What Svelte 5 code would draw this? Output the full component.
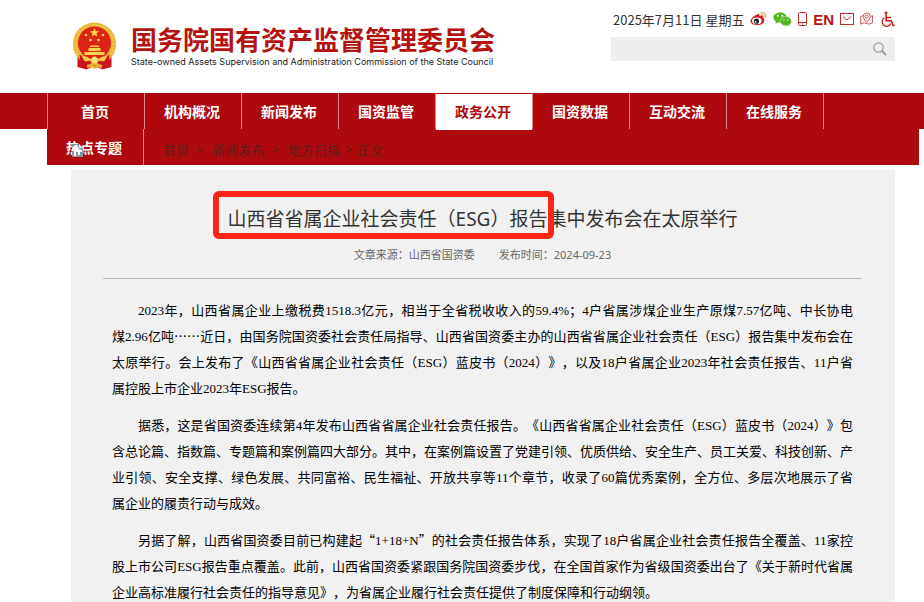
<script>
	const navItems = [
		'首页',
		'机构概况',
		'新闻发布',
		'国资监管',
		'政务公开',
		'国资数据',
		'互动交流',
		'在线服务',
		'热点专题'
	];
	const crumbs = ['首页', '新闻发布', '地方扫描'];

	// one entry per printed line
	const paragraphs = [
		[
			'2023年，山西省属企业上缴税费1518.3亿元，相当于全省税收收入的59.4%；4户省属涉煤企业生产原煤7.57亿吨、中长协电',
			'煤2.96亿吨……近日，由国务院国资委社会责任局指导、山西省国资委主办的山西省省属企业社会责任（ESG）报告集中发布会在',
			'太原举行。会上发布了《山西省省属企业社会责任（ESG）蓝皮书（2024）》，以及18户省属企业2023年社会责任报告、11户省',
			'属控股上市企业2023年ESG报告。'
		],
		[
			'据悉，这是省国资委连续第4年发布山西省省属企业社会责任报告。《山西省省属企业社会责任（ESG）蓝皮书（2024）》包',
			'含总论篇、指数篇、专题篇和案例篇四大部分。其中，在案例篇设置了党建引领、优质供给、安全生产、员工关爱、科技创新、产',
			'业引领、安全支撑、绿色发展、共同富裕、民生福祉、开放共享等11个章节，收录了60篇优秀案例，全方位、多层次地展示了省',
			'属企业的履责行动与成效。'
		],
		[
			'另据了解，山西省国资委目前已构建起“1+18+N”的社会责任报告体系，实现了18户省属企业社会责任报告全覆盖、11家控',
			'股上市公司ESG报告重点覆盖。此前，山西省国资委紧跟国务院国资委步伐，在全国首家作为省级国资委出台了《关于新时代省属',
			'企业高标准履行社会责任的指导意见》，为省属企业履行社会责任提供了制度保障和行动纲领。'
		]
	];

	// odd parts are latin letters and digits
	function splitLatin(line) {
		return line.split(/([A-Za-z0-9.%+]+)/);
	}

	let active = $state('政务公开');
	let keyword = $state('');
</script>

<div class="page" lang="zh-CN">
	<header>
		<a class="brand" href="#home">
			<svg class="emblem" viewBox="0 0 44 48" aria-hidden="true">
				<path d="M5 30 L39 30 L39 45 L30 47.500 L22 44 L14 47.500 L5 45Z" fill="#c8161d" />
				<circle cx="22" cy="22" r="21.5" fill="#e8b234" />
				<circle cx="22" cy="22" r="19" fill="none" stroke="#f3c94f" stroke-width="2" stroke-dasharray="2 1" />
				<circle cx="22" cy="21" r="16.500" fill="#dc2318" />
				<path d="M22 6l1.2 3.3h3.4l-2.7 2.1 1 3.3-2.9-2-2.9 2 1-3.3-2.7-2.1h3.4z" fill="#fbd84b" />
				<g fill="#fbd84b">
					<circle cx="13.5" cy="13" r="1.3" />
					<circle cx="30.5" cy="13" r="1.3" />
					<circle cx="18" cy="18" r="1.3" />
					<circle cx="26" cy="18" r="1.3" />
					<path d="M17 25l1-1.500h8l1 1.500zM16 26h12v3h-12zM12 30h20v3h-20z" />
				</g>
				<path d="M7 33l9 3 3 5-3 5-8-1.500z" fill="#c8161d" />
				<path d="M37 33l-9 3-3 5 3 5 8-1.500z" fill="#c8161d" />
				<path d="M9 34q6 0 9 3l4-3 4 3q3-3 9-3l-3 5q-4 1-6-1l-4 3-4-3q-2 2-6 1z" fill="#f6cb4c" />
				<path d="M14 43l4-1 4 2 4-2 4 1-1 3-4-1-3 2-3-2-4 1z" fill="#e8b234" />
				<circle cx="22" cy="38" r="3" fill="#fbe07a" />
			</svg>
			<span class="brand-text">
				<span class="brand-name">国务院国有资产监督管理委员会</span>
				<span class="brand-en">State-owned Assets Supervision and Administration Commission of the State Council</span>
			</span>
		</a>

		<div class="tools">
			<div class="tool-row">
				<span class="date">2025年7月11日 星期五</span>
				<a href="#weibo" aria-label="微博">
					<svg width="17" height="16" viewBox="0 0 18 16">
						<path d="M7 3.500C9 2 10.500 3 10 5c3-1 4 0 3.500 1.800C15.500 7.500 15.500 9 15 10.500 13 16 1 16 .5 10.500.5 8 4 4.500 7 3.500z" fill="#d7191f" />
						<ellipse cx="7.200" cy="10" rx="5" ry="3.500" fill="#fff" />
						<circle cx="6.800" cy="10.300" r="2.800" fill="#222" />
						<circle cx="5.900" cy="11" r="1" fill="#fff" />
						<path d="M11.500 3.800q3-.6 3 2.600M11.500 1.300q5.500-.5 5.200 5.500" fill="none" stroke="#ec9b3b" stroke-width="1.300" />
					</svg>
				</a>
				<a href="#wechat" aria-label="微信">
					<svg width="19" height="17" viewBox="0 0 20 17">
						<path d="M7.500 1C3.500 1 .5 3.300.5 6.300c0 1.700 1 3.200 2.500 4.200L2.500 13l2.700-1.500 2.300.3c4 0 7-2.400 7-5.500S11.500 1 7.500 1z" fill="#4fb81c" />
						<path d="M13.500 5.500c-3.400 0-6 2-6 4.800s2.600 4.700 6 4.700l2-.3 2.300 1.300-.5-2.200c1.300-.9 2.200-2.100 2.200-3.500 0-2.800-2.600-4.800-6-4.800z" fill="#4fb81c" stroke="#fff" stroke-width=".5" />
						<g fill="#fff">
							<circle cx="5.200" cy="4.500" r="1" />
							<circle cx="9.800" cy="4.500" r="1" />
							<circle cx="11.500" cy="9" r=".8" />
							<circle cx="15.500" cy="9" r=".8" />
						</g>
					</svg>
				</a>
				<a href="#mobile" aria-label="手机版">
					<svg width="9" height="14" viewBox="0 0 9 14" fill="none" stroke="#c02a2c">
						<rect x=".5" y=".5" width="8" height="13" rx="1" />
						<path d="M.5 10.500h8M4 12h1" />
					</svg>
				</a>
				<a class="en" href="#en">EN</a>
				<a href="#mail" aria-label="邮箱">
					<svg width="14" height="14" viewBox="0 0 14 14" fill="none" stroke="#c02a2c">
						<rect x=".5" y="1.500" width="13" height="11" />
						<path d="M3 4.500l4 3.500 4-3.500" />
					</svg>
				</a>
				<a href="#map" aria-label="网站地图">
					<svg width="14" height="14" viewBox="0 0 15 14" fill="none" stroke="#c9484a">
						<path d="M3 3.500L.8 4.500v8L4.500 11l5 1.500 4-1.500V3.500l-2.300.8" />
						<path d="M7.200 10.500C4.500 7.500 3.500 6 3.500 4.300a3.700 3.700 0 0 1 7.400 0c0 1.700-1 3.200-3.700 6.200z" />
						<circle cx="7.200" cy="4.500" r="1.600" />
					</svg>
				</a>
				<a href="#access" aria-label="无障碍">
					<svg width="15" height="17" viewBox="0 0 15 17" fill="none" stroke="#c01a1c">
						<circle cx="6" cy="2" r="1.500" fill="#c01a1c" stroke="none" />
						<path d="M6.200 3.500v6.300h5l2 4.700h1.500M6.500 6.500h4.500" stroke-width="1.600" />
						<path d="M4.300 6.800a4.600 4.600 0 1 0 6.700 5.700" stroke-width="1.200" />
					</svg>
				</a>
			</div>
			<form class="search" onsubmit={(e) => e.preventDefault()}>
				<input type="text" aria-label="站内搜索" bind:value={keyword} />
				<button type="submit" aria-label="搜索">
					<svg width="14" height="14" viewBox="0 0 14 14" fill="none" stroke="#999">
						<circle cx="5.500" cy="5.500" r="4.700" stroke-width="1.200" />
						<path d="M9 9l4 4" stroke-width="1.800" />
					</svg>
				</button>
			</form>
		</div>
	</header>

	<nav class="main-nav">
		<ul>
			{#each navItems as item, i}
				<li class:first={i === 0}>
					<a href="#nav-{i}" class:active={item === active} onclick={() => (active = item)}>{item}</a>
				</li>
			{/each}
		</ul>
	</nav>

	<nav class="breadcrumb" aria-label="当前位置">
		<svg class="marker" width="13" height="13" viewBox="0 0 13 13" aria-hidden="true">
			<path d="M1 0h7l4 4v9H1z" fill="#83949a" />
			<path d="M1 4l3-3h2l2 4 3 1v2H9v3H7V8H5v4H3V7H1z" fill="#fff" />
			<path d="M8 0l4 4H8z" fill="#dce9ec" />
		</svg>
		{#each crumbs as crumb, i}
			<a href="#crumb-{i}">{crumb}</a>
			<span class="sep" class:tight={i === crumbs.length - 1}>&gt;</span>
		{/each}
		<span>正文</span>
	</nav>

	<article>
		<div class="article-head">
			<h1><mark>山西省省属企业社会责任（ESG）报告</mark>集中发布会在太原举行</h1>
			<p class="meta">
				<span>文章来源：山西省国资委</span>
				<span>发布时间：2024-09-23</span>
			</p>
		</div>
		<div class="article-body">
			{#each paragraphs as lines}
				<p>
					{#each lines as line}
						<span class="line">{#each splitLatin(line) as part, i}{#if i % 2}<span class="latin">{part}</span>{:else}{part}{/if}{/each}</span>
					{/each}
				</p>
			{/each}
		</div>
	</article>
</div>

<style>
	:global(body) {
		margin: 0;
		background: #fff;
	}

	.page {
		font-family: 'Noto Sans', 'Noto Sans CJK SC', sans-serif;
		font-size: 13px;
		color: #333;
	}

	a {
		color: inherit;
		text-decoration: none;
	}

	header {
		display: flex;
		justify-content: space-between;
		box-sizing: border-box;
		min-height: 93px;
		padding: 9px 29px 0 72px;
	}

	.brand {
		display: flex;
		align-items: flex-start;
		gap: 14px;
		padding-top: 13px;
	}

	.emblem {
		width: 45px;
		height: 48px;
	}

	.brand-text {
		display: flex;
		flex-direction: column;
		white-space: nowrap;
	}

	.brand-name {
		font-family: 'Noto Sans CJK SC', sans-serif;
		font-size: 26px;
		font-weight: 700;
		line-height: 34px;
		color: #b4130f;
	}

	.brand-en {
		font-family: Inter, Arial, sans-serif;
		font-size: 9px;
		line-height: 12px;
		color: #222;
	}

	.tools {
		width: 284px;
	}

	.tool-row {
		display: flex;
		align-items: center;
		justify-content: space-between;
		height: 20px;
		padding-left: 2px;
		white-space: nowrap;
	}

	.tool-row svg {
		display: block;
	}

	.date {
		font-family: 'Noto Sans CJK SC', sans-serif;
	}

	.en {
		font-family: 'Liberation Sans', Arial, sans-serif;
		font-size: 15px;
		font-weight: 700;
		color: #b4130f;
	}

	.search {
		display: flex;
		height: 24px;
		margin-top: 8px;
		background: #eee;
	}

	.search input {
		flex: 1;
		min-width: 0;
		padding: 0 8px;
		border: none;
		background: none;
		outline: none;
	}

	.search button {
		display: flex;
		align-items: center;
		justify-content: center;
		width: 30px;
		padding: 0;
		border: none;
		background: none;
		cursor: pointer;
	}

	/* the item list is allowed to run over the bar when it wraps */
	.main-nav {
		height: 36px;
		background: #ae090c;
	}

	.main-nav ul {
		display: flex;
		flex-wrap: wrap;
		margin: 0 5px 0 47px;
		padding: 0;
		list-style: none;
		background: #ae090c;
	}

	.main-nav li {
		box-sizing: border-box;
		width: 97px;
		height: 36px;
		border-right: 1px solid #e08a8b;
	}

	.main-nav li.first {
		width: 98px;
		border-left: 1px solid #e08a8b;
	}

	.main-nav a {
		display: block;
		margin-top: 1px;
		padding: 0 2px 2px 0;
		font-family: 'Noto Sans CJK SC', sans-serif;
		font-size: 14px;
		font-weight: 700;
		line-height: 34px;
		text-align: center;
		color: #fff;
	}

	.main-nav a.active {
		background: #fff;
		color: #ae090c;
	}

	.breadcrumb {
		position: relative;
		display: flex;
		align-items: center;
		box-sizing: border-box;
		height: 36px;
		padding: 4px 0 0 163px;
		color: #5f1c1a;
	}

	.sep {
		margin: 0 8px;
	}

	.sep.tight {
		margin: 0 5px;
	}

	.marker {
		position: absolute;
		left: 71px;
		top: 15px;
	}

	article {
		margin: 5px 29px 0 71px;
		padding: 1px 33px 0 32px;
		background: #f1f1f1;
	}

	.article-head {
		padding: 32px 0 13px;
		border-bottom: 1px solid #b5b5b5;
		text-align: center;
	}

	h1 {
		margin: 0;
		font-size: 19px;
		font-weight: 400;
		line-height: 32px;
	}

	mark {
		position: relative;
		background: none;
		color: inherit;
	}

	mark::after {
		content: '';
		position: absolute;
		inset: -15px -7px -7px -15px;
		border: 6px solid #fb2416;
		border-radius: 6px;
	}

	.meta {
		display: flex;
		justify-content: center;
		gap: 24px;
		margin: 10px 0 0;
		font-size: 11px;
		line-height: 20px;
		color: #666;
	}

	.article-body {
		padding: 18px 9px 0;
		font-family: 'Noto Sans CJK SC', sans-serif;
		font-size: 13px;
		line-height: 26px;
		color: #000;
		text-spacing-trim: space-all;
	}

	.article-body p {
		margin: 0 0 11px;
	}

	.line {
		display: block;
		text-align-last: justify;
	}

	.line:first-child {
		text-indent: 2em;
	}

	.line:last-child {
		text-align-last: left;
	}

	.latin {
		font-family: 'Liberation Serif', serif;
		line-height: 1;
	}
</style>
